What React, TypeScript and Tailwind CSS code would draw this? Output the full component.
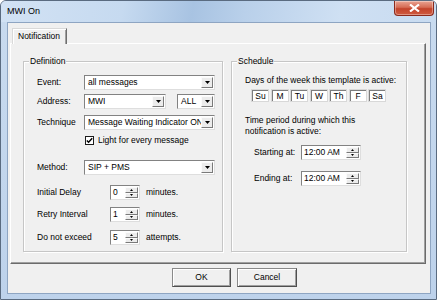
import React from "react";

const Down = () => (
  <svg width="5" height="3" viewBox="0 0 5 3">
    <path d="M0 0h5L2.5 3z" fill="#000" />
  </svg>
);
const SmallUp = () => (
  <svg width="3" height="2" viewBox="0 0 3 2">
    <path d="M0 2h3L1.5 0z" fill="#000" />
  </svg>
);
const SmallDown = () => (
  <svg width="3" height="2" viewBox="0 0 3 2">
    <path d="M0 0h3L1.5 2z" fill="#000" />
  </svg>
);

const sunken =
  "bg-white border border-t-[#828282] border-l-[#828282] border-r-[#dedede] border-b-[#dedede]";
const raised =
  "bg-[#ececec] border border-t-[#fbfbfb] border-l-[#fbfbfb] border-r-[#7a7a7a] border-b-[#7a7a7a]";

function Combo({ cls, text }: { cls: string; text: string }) {
  return (
    <div className={`flex h-[15px] p-[1px] ${sunken} ${cls}`}>
      <span className="flex-1 overflow-hidden whitespace-nowrap pl-[2px] leading-[11px]">{text}</span>
      <div className={`w-[12px] flex items-center justify-center ${raised}`}>
        <Down />
      </div>
    </div>
  );
}

function Spin({ cls, text }: { cls: string; text: string }) {
  return (
    <div className={`flex h-[15px] p-[1px] ${sunken} ${cls}`}>
      <span className="flex-1 overflow-hidden whitespace-nowrap pl-[1px] leading-[11px]">{text}</span>
      <div className="w-[13px] flex flex-col">
        <div className={`flex-1 flex items-center justify-center ${raised}`}>
          <SmallUp />
        </div>
        <div className={`flex-1 flex items-center justify-center ${raised}`}>
          <SmallDown />
        </div>
      </div>
    </div>
  );
}

function Group({ title, cls, children }: { title: string; cls: string; children: React.ReactNode }) {
  return (
    <div
      className={`relative h-[191px] border border-[#c6c6c6] shadow-[1px_1px_0_#ffffff,inset_1px_1px_0_#ffffff] ${cls}`}
    >
      <span className="absolute left-[5px] top-[-6px] bg-[#f0f0f0] px-[1px] leading-[10px]">{title}</span>
      {children}
    </div>
  );
}

export default function App() {
  const days = ["Su", "M", "Tu", "W", "Th", "F", "Sa"];
  return (
    <div className="w-[437px] h-[300px] flex flex-col rounded-t-[6px] border border-[#5a6b80] bg-[linear-gradient(180deg,#c9dbef_0%,#bdd2eb_100%)] font-['Liberation_Sans',Arial,sans-serif] text-[8.5px] text-black overflow-hidden">
      {/* title bar */}
      <div className="h-[21px] flex items-start justify-between bg-[linear-gradient(100deg,#d2e2f4_0%,#c6daf0_28%,#a8c3e2_44%,#b9d0ea_56%,#cfe0f3_78%,#c8dbf0_100%)]">
        <span className="pl-[6px] pt-[5px] text-[9px] leading-[11px]">MWI On</span>
        <div className="mr-[2px] w-[40px] h-[15px] rounded-b-[4px] border border-t-0 border-[#8b2a1c] bg-[linear-gradient(180deg,#e9a493_0%,#d66c55_45%,#c3432b_55%,#cf5b40_100%)] flex items-center justify-center shadow-[inset_0_0_0_1px_rgba(255,255,255,0.35)]">
          <svg width="11" height="8" viewBox="0 0 11 8">
            <path d="M1 0.5L10 7.5M10 0.5L1 7.5" stroke="#fff" strokeWidth="2.2" />
          </svg>
        </div>
      </div>
      {/* client */}
      <div className="ml-[6px] w-[424px] h-[272px] border border-[#8ea5c2] bg-[#f0f0f0] flex flex-col">
        {/* tab */}
        <div className="pl-[4px] pt-[5px] flex">
          <div className="h-[16px] w-[55px] flex items-center pl-[5px] border border-b-0 border-t-[#d9d9d9] border-l-[#d9d9d9] border-r-[#6e6e6e] shadow-[inset_1px_1px_0_#ffffff,inset_-1px_0_0_#a0a0a0] bg-[#f0f0f0] relative z-10 mb-[-1px] leading-[11px]">
            Notification
          </div>
        </div>
        {/* panel */}
        <div className="ml-[2px] w-[416px] h-[221px] border border-t-[#ffffff] border-l-[#ffffff] border-r-[#6b6b6b] border-b-[#6b6b6b] shadow-[inset_-1px_-1px_0_#a0a0a0] flex items-start pl-[12px] pt-[17px] gap-[8px]">
          <Group title="Definition" cls="w-[200px]">
            <div className="flex flex-col pl-[13px] pt-[13px]">
              <div className="flex items-center">
                <span className="w-[47px]">Event:</span>
                <Combo cls="w-[131px]" text="all messages" />
              </div>
              <div className="flex items-center mt-[4px]">
                <span className="w-[47px]">Address:</span>
                <Combo cls="w-[82px]" text="MWI" />
                <Combo cls="w-[38px] ml-[11px]" text="ALL" />
              </div>
              <div className="flex items-center mt-[6px]">
                <span className="w-[47px]">Technique</span>
                <Combo cls="w-[131px]" text="Message Waiting Indicator ON" />
              </div>
              <div className="flex items-center mt-[5px] pl-[48px] h-[10px]">
                <div className="w-[9px] h-[9px] border border-[#1c1c1c] bg-white flex items-center justify-center">
                  <svg width="7" height="7" viewBox="0 0 7 7">
                    <path d="M0.8 3.4L2.6 5.3L6.2 1.2" stroke="#000" strokeWidth="1.4" fill="none" />
                  </svg>
                </div>
                <span className="ml-[4px] leading-[10px]">Light for every message</span>
              </div>
              <div className="flex items-center mt-[15px]">
                <span className="w-[47px]">Method:</span>
                <Combo cls="w-[131px]" text="SIP + PMS" />
              </div>
              <div className="flex items-center mt-[10px]">
                <span className="w-[73px]">Initial Delay</span>
                <Spin cls="w-[30px]" text="0" />
                <span className="ml-[6px]">minutes.</span>
              </div>
              <div className="flex items-center mt-[7px]">
                <span className="w-[73px]">Retry Interval</span>
                <Spin cls="w-[30px]" text="1" />
                <span className="ml-[6px]">minutes.</span>
              </div>
              <div className="flex items-center mt-[8px]">
                <span className="w-[73px]">Do not exceed</span>
                <Spin cls="w-[30px]" text="5" />
                <span className="ml-[6px]">attempts.</span>
              </div>
            </div>
          </Group>
          <Group title="Schedule" cls="w-[176px]">
            <div className="flex flex-col pl-[13px] pt-[13px]">
              <span className="leading-[11px]">Days of the week this template is active:</span>
              <div className="flex gap-[1.5px] ml-[6px] mt-[3px]">
                {days.map((d) => (
                  <div key={d} className="w-[18px] h-[13px] border border-[#d8d8d8] flex">
                    <div className="flex-1 border-t border-l border-[#7d7d7d] bg-white flex items-center justify-center leading-[10px]">
                      {d}
                    </div>
                  </div>
                ))}
              </div>
              <span className="mt-[13px] leading-[11px]">Time period during which this</span>
              <span className="leading-[11px]">notification is active:</span>
              <div className="flex items-center mt-[8px] pl-[9px]">
                <span className="w-[47px]">Starting at:</span>
                <Spin cls="w-[60px]" text="12:00 AM" />
              </div>
              <div className="flex items-center mt-[11px] pl-[9px]">
                <span className="w-[47px]">Ending at:</span>
                <Spin cls="w-[60px]" text="12:00 AM" />
              </div>
            </div>
          </Group>
        </div>
        {/* buttons */}
        <div className="flex pl-[164px] pt-[4px] gap-[6px]">
          <div className="w-[59px] h-[19px] border border-[#8a8a8a] border-r-[#4f4f4f] border-b-[#4f4f4f] shadow-[inset_1px_1px_0_#ffffff,inset_-1px_-1px_0_#a0a0a0] bg-[#f0f0f0] flex items-center justify-center leading-[11px]">
            OK
          </div>
          <div className="w-[60px] h-[19px] border border-[#8a8a8a] border-r-[#4f4f4f] border-b-[#4f4f4f] shadow-[inset_1px_1px_0_#ffffff,inset_-1px_-1px_0_#a0a0a0] bg-[#f0f0f0] flex items-center justify-center leading-[11px]">
            Cancel
          </div>
        </div>
      </div>
    </div>
  );
}
